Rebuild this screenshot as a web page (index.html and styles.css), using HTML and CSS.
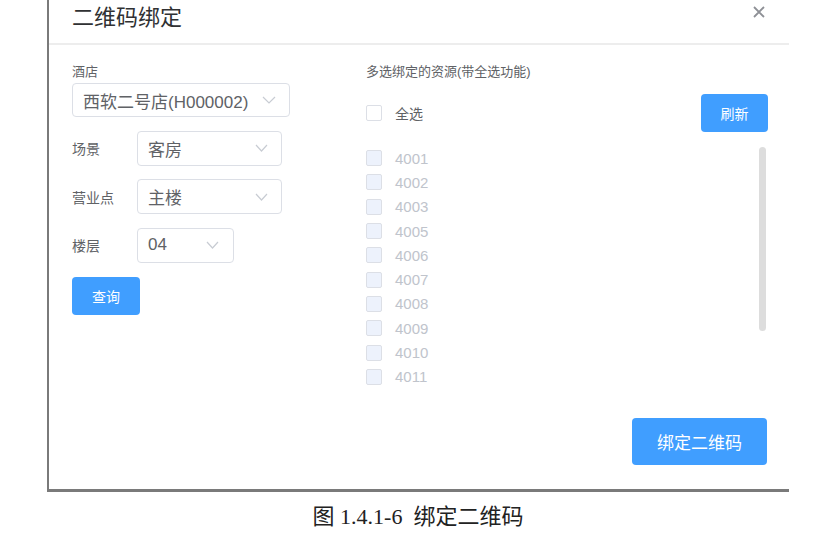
FILE: index.html
```html
<!DOCTYPE html>
<html lang="zh">

<head>
  <meta charset="UTF-8">
  <meta name="viewport" content="width=device-width, initial-scale=1.0">
  <title>二维码绑定</title>
  <link rel="stylesheet" href="styles.css">
</head>

<body>
  <div class="dialog">
    <div class="dialog-header">
      <span class="title">二维码绑定</span>
      <span class="close">
        <svg width="12" height="12" viewBox="0 0 12 12"><path d="M1 1L11 11M11 1L1 11" stroke="#8e9096" stroke-width="1.8" fill="none"/></svg>
      </span>
    </div>

    <div class="dialog-body">
      <div class="filters">
        <div class="label-top">酒店</div>
        <div class="select select-wide">
          <span>西软二号店(H000002)</span>
          <svg class="arrow" width="14" height="8" viewBox="0 0 14 8"><path d="M1 1L7 7L13 1" stroke="#c8ccd3" stroke-width="1.2" fill="none"/></svg>
        </div>

        <div class="row">
          <span class="label">场景</span>
          <div class="select">
            <span>客房</span>
            <svg class="arrow" width="13" height="8" viewBox="0 0 13 8"><path d="M1 1L6.5 7L12 1" stroke="#c8ccd3" stroke-width="1.2" fill="none"/></svg>
          </div>
        </div>
        <div class="row">
          <span class="label">营业点</span>
          <div class="select">
            <span>主楼</span>
            <svg class="arrow" width="13" height="8" viewBox="0 0 13 8"><path d="M1 1L6.5 7L12 1" stroke="#c8ccd3" stroke-width="1.2" fill="none"/></svg>
          </div>
        </div>
        <div class="row">
          <span class="label">楼层</span>
          <div class="select select-small">
            <span>04</span>
            <svg class="arrow" width="13" height="8" viewBox="0 0 13 8"><path d="M1 1L6.5 7L12 1" stroke="#c8ccd3" stroke-width="1.2" fill="none"/></svg>
          </div>
        </div>
        <button class="btn btn-query">查询</button>
      </div>

      <div class="resources">
        <div class="label-top">多选绑定的资源(带全选功能)</div>
        <div class="check-all">
          <label class="check"><span class="box"></span><span>全选</span></label>
          <button class="btn btn-refresh">刷新</button>
        </div>
        <div class="list">
          <label class="check item"><span class="box"></span><span>4001</span></label>
          <label class="check item"><span class="box"></span><span>4002</span></label>
          <label class="check item"><span class="box"></span><span>4003</span></label>
          <label class="check item"><span class="box"></span><span>4005</span></label>
          <label class="check item"><span class="box"></span><span>4006</span></label>
          <label class="check item"><span class="box"></span><span>4007</span></label>
          <label class="check item"><span class="box"></span><span>4008</span></label>
          <label class="check item"><span class="box"></span><span>4009</span></label>
          <label class="check item"><span class="box"></span><span>4010</span></label>
          <label class="check item"><span class="box"></span><span>4011</span></label>
          <div class="scrollbar"></div>
        </div>
      </div>
    </div>

    <div class="dialog-footer">
      <button class="btn btn-bind">绑定二维码</button>
    </div>
  </div>

  <p class="caption">图 1.4.1-6&nbsp; 绑定二维码</p>
</body>

</html>
```

FILE: styles.css
```css
* {
  margin: 0;
  box-sizing: border-box;
}

body {
  font-family: "Liberation Sans", "Noto Sans CJK SC", sans-serif;
  background: white;
  color: #606266;
}

.dialog {
  margin-left: 47px;
  width: 742px;
  height: 492px;
  border-left: 2px solid #7a7a7a;
  border-bottom: 3px solid #7a7a7a;
  background: white;
}

.dialog-header {
  height: 45px;
  display: flex;
  justify-content: space-between;
  align-items: flex-start;
  padding: 5px 24px 0 23px;
  border-bottom: 2px solid #ededed;
}

.title {
  font-size: 22px;
  line-height: 26px;
  color: #303133;
}

.close {
  margin-top: 1px;
  line-height: 0;
}

.dialog-body {
  display: flex;
  padding-left: 23px;
}

.filters {
  width: 294px;
  padding-top: 18px;
}

.label-top {
  font-size: 13px;
  line-height: 18px;
  color: #606266;
}

.select {
  display: flex;
  justify-content: space-between;
  align-items: center;
  width: 145px;
  height: 35px;
  padding: 0 13px 0 10px;
  border: 1px solid #dcdfe6;
  border-radius: 4px;
  font-size: 17px;
  color: #606266;
}

.select-wide {
  width: 218px;
  height: 34px;
  margin-top: 2px;
}

.select-small {
  width: 97px;
  padding-right: 14px;
}

.row {
  display: flex;
  align-items: center;
  margin-top: 13.5px;
}

.row:first-of-type {
  margin-top: 14px;
}

.label {
  width: 65px;
  font-size: 14px;
}

.btn {
  border: none;
  border-radius: 4px;
  background: #409eff;
  color: white;
  font-family: inherit;
  font-size: 14px;
}

.btn-query {
  width: 68px;
  height: 38px;
  margin-top: 14px;
}

.resources {
  width: 402px;
  padding-top: 18px;
}

.check-all {
  display: flex;
  justify-content: space-between;
  align-items: center;
  height: 38px;
  margin-top: 13px;
}

.check {
  display: flex;
  align-items: center;
  font-size: 14px;
  color: #606266;
}

.box {
  width: 16px;
  height: 16px;
  margin-right: 13px;
  border: 1px solid #dcdfe6;
  border-radius: 2px;
  background: white;
}

.btn-refresh {
  width: 67px;
}

.btn-refresh,
.check-all {
  height: 38px;
}

.list {
  position: relative;
  height: 243px;
  margin-top: 14px;
  overflow: hidden;
}

.item {
  height: 24.3px;
  font-size: 15px;
  color: #c0c4cc;
}

.item .box {
  background: #edf2fc;
}

.scrollbar {
  position: absolute;
  top: 1px;
  right: 2px;
  width: 7px;
  height: 184px;
  border-radius: 4px;
  background: #dddddd;
}

.dialog-footer {
  display: flex;
  justify-content: flex-end;
  padding-right: 22px;
  margin-top: 29px;
}

.btn-bind {
  width: 135px;
  height: 47px;
  font-size: 17px;
}

.caption {
  margin: 12px 0 0 47px;
  width: 742px;
  text-align: center;
  font-family: "Liberation Serif", "Noto Sans CJK SC", serif;
  font-size: 22px;
  line-height: 26px;
  color: #222;
}
```
